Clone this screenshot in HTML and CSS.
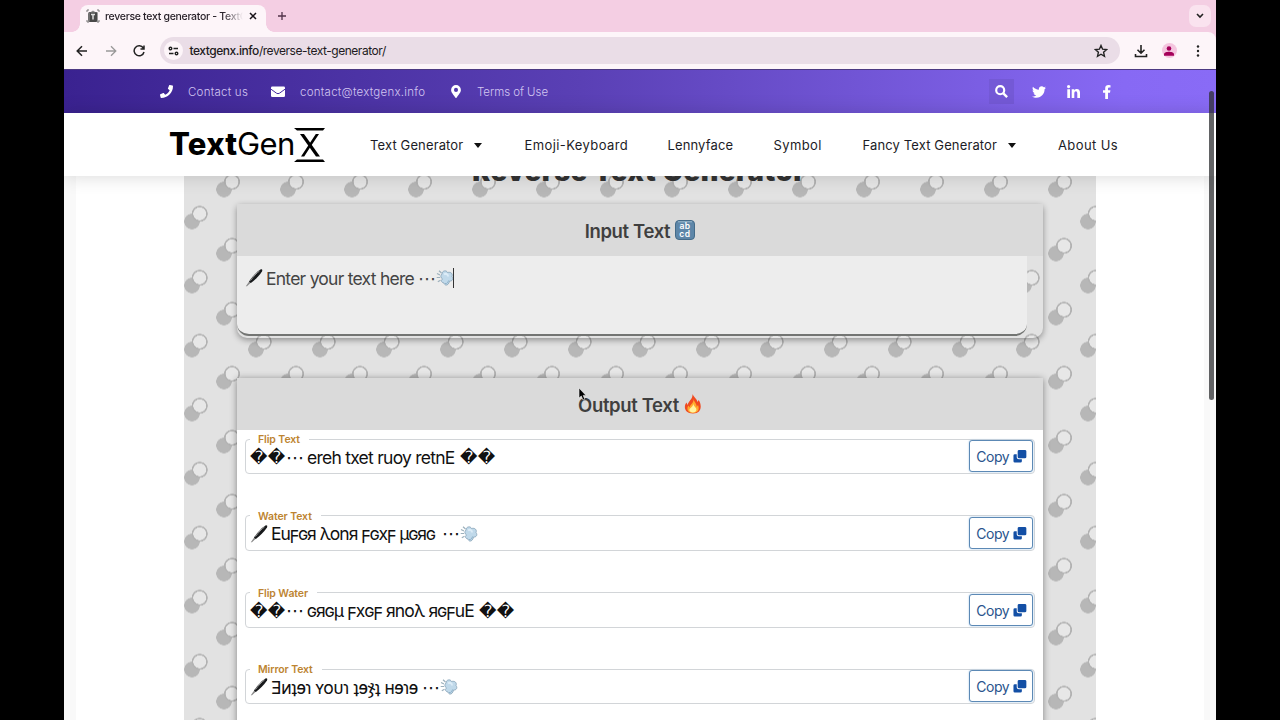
FILE: index.html
```html
<!DOCTYPE html>
<html lang="en">
<head>
<meta charset="utf-8">
<title>reverse text generator - TextGenX</title>
<link rel="stylesheet" href="styles.css">
</head>
<body>
<svg class="defs" aria-hidden="true">
  <symbol id="pen" viewBox="0 0 18 20"><path d="M.8 18.300 4.500 13 6.300 14.300 2 18.300z" fill="#8a8a8a"/><path d="M4 13.500C7.500 8.500 12 3.500 15.500 1.500 17 1 17.700 2 17 3.500 14 8 10 12 5.800 15z" fill="#17191b"/><path d="M5.500 12.500C8.500 8.500 11.500 5 14.500 3" stroke="#999" stroke-width="1" fill="none"/></symbol>
  <symbol id="dash" viewBox="0 0 18 18"><path d="M6 5C6 1.500 10.500.800 11.500 3.500 15 2.500 17.200 5 16 7.500 18 10 16 12.500 13.500 12 12.800 16.500 9 17.500 8 14 5 13.500 4.800 11 6.500 10 4.500 9 4.300 6.500 6 5z" fill="#c0d9ea" stroke="#86a2b6" stroke-width=".8"/><path d="M8 5.500c2-1.500 4 0 4 2" fill="none" stroke="#dcecf7" stroke-width="2"/><path d="M9 14.500c2 .5 3-1 3.500-3" fill="none" stroke="#8fb3cc" stroke-width="1"/><path d="M1 4.500 4 6M.700 8.500H4M1.800 12.800 4.500 11.300M3 1.800 5.500 4" stroke="#9cb0bc" stroke-width="1.200"/></symbol>
  <symbol id="copy" viewBox="0 0 15 15"><path d="M6.500.500h6.300a1.500 1.500 0 0 1 1.500 1.500v6a1.500 1.500 0 0 1-1.500 1.500H6.500A1.500 1.500 0 0 1 5 8V2A1.500 1.500 0 0 1 6.500.500z" fill="#134fa5"/><path d="M4 5H2A1.500 1.500 0 0 0 .500 6.500v6A1.500 1.500 0 0 0 2 14h6a1.500 1.500 0 0 0 1.500-1.500v-2H6.300A2.300 2.300 0 0 1 4 8.200z" fill="#134fa5"/></symbol>
</svg>
<div class="browser">
  <div class="tabstrip">
    <div class="tab">
      <svg class="favicon" viewBox="0 0 14 14"><path d="M1 3V1h2M11 1h2v2M13 11v2h-2M3 13H1v-2" fill="none" stroke="#777"/><rect x="2" y="3" width="10" height="10" rx="2" fill="#484848"/><path d="M4 3.500 7 1.500l3 2" fill="#888"/><path d="M5 5.500h4M7 5.500v5" stroke="#ddd" stroke-width="1.500"/><path d="M3 4v8M11.500 4v8" stroke="#999"/></svg>
      <span class="tab-title">reverse text generator - TextG</span>
      <svg class="tab-close" viewBox="0 0 8 8"><path d="m1 1 6 6M7 1 1 7" stroke="#191319" stroke-width="1.500"/></svg>
    </div>
    <svg class="tab-new" viewBox="0 0 10 10"><path d="M5 1v8M1 5h8" stroke="#51334a" stroke-width="1.300"/></svg>
    <div class="tab-menu"><svg width="8" height="6" viewBox="0 0 8 6"><path d="m1 1 3 3 3-3" fill="none" stroke="#222" stroke-width="1.600"/></svg></div>
  </div>
  <div class="toolbar">
    <svg class="nav-icon" viewBox="0 0 12 12"><path d="M11 6H1.500M6 1.200 1.200 6 6 10.800" fill="none" stroke="#222" stroke-width="1.500"/></svg>
    <svg class="nav-icon" viewBox="0 0 12 12"><path d="M1 6h9.500M6 1.200 10.800 6 6 10.800" fill="none" stroke="#999" stroke-width="1.300"/></svg>
    <svg class="nav-icon" viewBox="0 0 12 12"><path d="M10.300 3A5 5 0 1 0 11 7M11 .500V4H7.500" fill="none" stroke="#222" stroke-width="1.500"/></svg>
    <div class="omnibox">
      <span class="site-info"><svg width="11" height="10" viewBox="0 0 10 10"><g fill="none" stroke="#222" stroke-width="1.400"><circle cx="2" cy="2.500" r="1.300"/><path d="M5 2.500h4.500M.500 7.500H5"/><circle cx="8" cy="7.500" r="1.300"/></g></svg></span>
      <span class="url">textgenx.info<i>/reverse-text-generator/</i></span>
      <svg class="star" viewBox="0 0 14 14"><path d="m7 1.500 1.600 3.700 4 .400-3 2.700.900 4L7 10.200l-3.500 2.100.900-4-3-2.700 4-.400z" fill="none" stroke="#222" stroke-width="1.400"/></svg>
    </div>
    <svg class="download" viewBox="0 0 14 14"><path d="M7 1v8M3.500 5.700 7 9.200l3.500-3.500M1.500 10v2.500h11V10" fill="none" stroke="#222" stroke-width="1.600"/></svg>
    <span class="avatar"><svg width="10" height="10" viewBox="0 0 10 10"><circle cx="5" cy="2.500" r="2.300" fill="#a5005a"/><path d="M0 9.700V8.300C0 6.500 3 5.800 5 5.800s5 .700 5 2.500v1.400z" fill="#a5005a"/></svg></span>
    <svg class="kebab" viewBox="0 0 4 12"><g fill="#222"><circle cx="2" cy="1.500" r="1.200"/><circle cx="2" cy="6" r="1.200"/><circle cx="2" cy="10.500" r="1.200"/></g></svg>
  </div>
  <div class="topbar">
    <svg class="phone" viewBox="0 0 512 512"><path fill="#fff" d="M493.400 24.600l-104-24c-11.300-2.600-22.900 3.300-27.500 13.900l-48 112c-4.200 9.800-1.400 21.300 6.900 28l60.600 49.600c-36 76.700-98.900 140.500-177.200 177.200l-49.600-60.600c-6.800-8.300-18.200-11.100-28-6.900l-112 48C3.900 366.500-2 378.100.600 389.400l24 104C27.100 504.200 36.700 512 48 512c256.100 0 464-207.500 464-464 0-11.200-7.700-20.900-18.600-23.400z"/></svg>
    <span class="contact">Contact us</span>
    <svg class="mail" viewBox="0 0 14 11"><rect y=".5" width="14" height="10.500" rx="1.300" fill="#fff"/><path d="M0 3.200 5.500 7.200Q7 8.200 8.500 7.200L14 3.200" fill="none" stroke="#4429a0"/></svg>
    <span class="email">contact@textgenx.info</span>
    <svg class="pin" viewBox="0 0 384 512"><path fill="#fff" d="M172 502C27 291 0 270 0 192a192 192 0 1 1 384 0c0 78-27 99-172 310a24 24 0 0 1-40 0zM192 272a80 80 0 1 0 0-160 80 80 0 0 0 0 160z"/></svg>
    <span class="terms">Terms of Use</span>
    <span class="search"><svg width="13" height="13" viewBox="0 0 12 12"><circle cx="4.800" cy="4.800" r="3.700" fill="none" stroke="#fff" stroke-width="2"/><path d="m7.700 7.700 3.500 3.500" stroke="#fff" stroke-width="2.200"/></svg></span>
    <svg class="social" viewBox="0 0 512 512"><path fill="#fff" d="M459.400 151.700c.3 4.500.3 9.100.3 13.600 0 138.700-105.600 298.600-298.600 298.600-59.500 0-114.700-17.200-161.100-47.100 8.400 1 16.600 1.300 25.300 1.300 49.100 0 94.200-16.600 130.300-44.800-46.100-1-84.800-31.200-98.100-72.800 6.500 1 13 1.600 19.800 1.600 9.400 0 18.800-1.300 27.600-3.600-48.100-9.700-84.100-52-84.100-103v-1.300c14 7.800 30.200 12.700 47.400 13.300-28.300-18.800-46.800-51-46.800-87.400 0-19.500 5.200-37.400 14.300-53 51.700 63.700 129.300 105.300 216.400 109.800-1.600-7.800-2.600-15.900-2.600-24 0-57.800 46.800-104.900 104.900-104.900 30.200 0 57.500 12.700 76.700 33.100 23.700-4.500 46.500-13.300 66.600-25.300-7.800 24.400-24.400 44.800-46.100 57.800 21.100-2.300 41.600-8.100 60.400-16.200-14.300 20.800-32.200 39.300-52.600 54.300z"/></svg>
    <svg class="social in" viewBox="0 0 13 13"><path fill="#fff" d="M.300 4.300H3V13H.300zM4.700 4.300h2.600v1.200C8.700 3.300 13 3.500 13 7.600V13h-2.700V8.500c0-3-3-2.700-3 0V13H4.700z"/><circle cx="1.600" cy="1.600" r="1.600" fill="#fff"/></svg>
    <svg class="fb" viewBox="0 0 8 14"><path fill="#fff" d="M2.200 14V7.800H0V5.200h2.200V3.300C2.200 1.100 3.500 0 5.500 0L7.500.200v2.200H6.300C5.200 2.400 5 3 5 3.700v1.500h2.400L7 7.800H5V14z"/></svg>
  </div>
  <header class="site-header">
    <div class="logo"><b>Text</b><span>Gen</span><svg width="32" height="36" viewBox="0 0 32 36"><path d="M0 1h31l-2 2.600H3zM3 32.400h26l2 2.600H0z" fill="#000"/><path d="M25 7h-3.200L7 29.500h3.200L17 19z" fill="#000"/><path d="M6 7h4L26 29.500H22z" fill="#000"/></svg></div>
    <nav class="menu">
      <a class="m1">Text Generator</a><a class="m2">Emoji-Keyboard</a><a class="m3">Lennyface</a><a class="m4">Symbol</a><a class="m5">Fancy Text Generator</a><a class="m6">About Us</a>
    </nav>
  </header>
  <div class="page">
    <main class="content">
      <h1>Reverse Text Generator</h1>
      <section class="card input-card">
        <h2>Input Text <svg class="emoji" viewBox="0 0 20 20"><rect x=".5" y=".5" width="19" height="19" rx="3.500" fill="#5d86a8" stroke="#446b89"/><path d="M3 1.800h14" stroke="#9dbbcf"/><g fill="#fff" font-family="Inter" font-weight="600" font-size="8.500" text-anchor="middle"><text x="10" y="8.500" letter-spacing=".5">ab</text><text x="10" y="16.500" letter-spacing=".5">cd</text></g></svg></h2>
        <div class="textarea"><svg class="pen"><use href="#pen"/></svg><span class="typed">Enter your text here</span><span class="dots">⋯</span><svg class="dash"><use href="#dash"/></svg><i class="caret"></i></div>
      </section>
      <section class="card output-card">
        <h2>Output Text <svg class="emoji flame" viewBox="0 0 18 20"><path d="M8.500 0C10 3.500 13 5 13.500 8l1.200-2C18 11 18 19.500 9 19.500 0 19.500-.500 12 2.500 8.500L3.500 11C4.500 7 9 5 8.500 0z" fill="#f04a20"/><path d="M9.500 5c.300 2.500 3.500 5 3.200 8l1.300-2C16 16 13.500 19 9 19c-4.700 0-7-3.500-4.700-7.500l1.400 2C5.700 10.500 9.800 9.500 9.500 5z" fill="#ffab2e"/><path d="M9.400 9.500c0 3 3.500 4 3 6.500-.500 3.500-7 3.200-7 0 0-2 4-3.300 4-6.500z" fill="#fff3a0"/></svg></h2>
        <div class="rows">
          <fieldset><legend>Flip Text</legend><p><span class="fffd">��</span><span class="dots">⋯</span><span class="t1">ereh txet ruoy retnE</span><span class="fffd">��</span></p><button>Copy <svg><use href="#copy"/></svg></button></fieldset>
          <fieldset><legend>Water Text</legend><p><svg class="pen"><use href="#pen"/></svg><span class="t2">Euϝɢя λonя ϝɢxϝ µɢяɢ</span><span class="dots">⋯</span><svg class="dash"><use href="#dash"/></svg></p><button>Copy <svg><use href="#copy"/></svg></button></fieldset>
          <fieldset><legend>Flip Water</legend><p><span class="fffd">��</span><span class="dots">⋯</span><span class="t3">ɢяɢµ ϝxɢϝ яnoλ яɢϝuE</span><span class="fffd">��</span></p><button>Copy <svg><use href="#copy"/></svg></button></fieldset>
          <fieldset><legend>Mirror Text</legend><p><svg class="pen"><use href="#pen"/></svg><span class="t4">Ǝᴎʇɘɿ ʏoᴜɿ ʇɘჯʇ ʜɘɿɘ</span><span class="dots">⋯</span><svg class="dash"><use href="#dash"/></svg></p><button>Copy <svg><use href="#copy"/></svg></button></fieldset>
        </div>
      </section>
    </main>
  </div>
  <div class="scroll-thumb"></div>
  <svg class="cursor" viewBox="0 0 9 14"><path d="M1 1v10l2.300-2 1.700 4 1.800-.8L5.200 8.400H8z" fill="#000" stroke="#eee" stroke-width=".6"/></svg>
</div>
</body>
</html>
```

FILE: styles.css
```css
* { box-sizing: border-box; }
body { margin: 0; background: #000; font-family: Inter, "Noto Sans", "DejaVu Sans", sans-serif; overflow: hidden; }
svg { flex: none; display: block; }
span, a, p, h1, h2, legend { white-space: nowrap; }
.defs { position: absolute; width: 0; height: 0; }
.browser { position: relative; width: 1152px; height: 720px; margin: 0 auto; overflow: hidden; background: #f4cee3; display: flex; flex-direction: column; }

.tabstrip { height: 32px; flex: none; display: flex; align-items: center; padding: 0 5px 0 16px; }
.tab { position: relative; width: 186px; height: 27px; margin-top: 5px; background: #fdf5f9; border-radius: 8px 8px 0 0; display: flex; align-items: center; padding: 0 9px 5px 6px; }
.tab::before, .tab::after { content: ""; position: absolute; bottom: 0; width: 8px; height: 8px; }
.tab::before { left: -8px; background: radial-gradient(circle at 0 0, transparent 7.5px, #fdf5f9 8px); }
.tab::after { right: -8px; background: radial-gradient(circle at 100% 0, transparent 7.5px, #fdf5f9 8px); }
.favicon { width: 14px; height: 14px; }
.tab-title { margin: 1px 0 0 5px; width: 138px; overflow: hidden; font-size: 10.5px; line-height: 16px; letter-spacing: -.3px; font-weight: 500; color: #29222a; -webkit-mask-image: linear-gradient(90deg, #000 118px, transparent 138px); }
.tab-close { width: 8px; height: 8px; margin-left: auto; }
.tab-new { width: 10px; height: 10px; margin-left: 11px; }
.tab-menu { width: 22px; height: 22px; margin-left: auto; border-radius: 7px; background: #fae3ef; display: flex; align-items: center; justify-content: center; }

.toolbar { height: 37px; flex: none; background: #fdf5f9; border-radius: 0 8px 0 0; display: flex; align-items: center; padding-left: 12px; }
.nav-icon { width: 12px; height: 12px; margin-right: 16.5px; }
.omnibox { width: 960px; height: 27px; border-radius: 14px; background: #eadde7; display: flex; align-items: center; padding: 0 12px 0 4px; margin-left: -2px; }
.site-info { width: 19px; height: 19px; border-radius: 50%; background: #fdf5f9; display: flex; align-items: center; justify-content: center; }
.url { margin-left: 7px; font-size: 12px; color: #211a21; font-weight: 500; letter-spacing: -.46px; }
.url i { font-style: normal; font-weight: 400; }
.star { width: 14px; height: 14px; margin-left: auto; }
.download { width: 14px; height: 14px; margin-left: 14px; }
.avatar { width: 15px; height: 15px; border-radius: 50%; background: #f4c5df; margin-left: 14px; display: flex; align-items: center; justify-content: center; }
.kebab { width: 4px; height: 12px; margin-left: 19px; }

.topbar { height: 44px; flex: none; background: linear-gradient(90deg, #3a2290 0%, #5a40b5 45%, #8769f4 92%, #896bf6 100%); border-top: 1px solid #4c3982; display: flex; align-items: center; padding-left: 96px; color: #d2c6f1; font-weight: 300; font-size: 11.5px; }
.phone { width: 13px; height: 13px; }
.contact { width: 60px; margin-left: 15px; letter-spacing: .25px; }
.mail { width: 14px; height: 11px; margin-left: 23px; }
.email { width: 127px; margin-left: 15px; letter-spacing: .26px; }
.pin { width: 10px; height: 13px; margin-left: 24px; }
.terms { width: 72px; margin-left: 16px; letter-spacing: -.05px; }
.search { width: 25px; height: 25px; margin-left: 440px; background: #7459d6; display: flex; align-items: center; justify-content: center; }
.social { width: 14px; height: 14px; margin-left: 18px; }
.social.in { width: 13px; height: 13px; margin-left: 21px; margin-top: -1px; }
.fb { width: 8px; height: 14px; margin-left: 23px; }

.site-header { position: relative; z-index: 2; height: 63px; flex: none; background: #fff; display: flex; align-items: center; box-shadow: 0 0 18px rgba(0,0,0,.16); padding: 1px 0 0 105px; }
.logo { width: 157px; display: flex; align-items: center; color: #000; font-size: 31px; }
.logo b { font-weight: 800; font-size: 31px; letter-spacing: .3px; width: 68px; line-height: 36px; margin-top: -2px; }
.logo span { font-weight: 400; letter-spacing: -.6px; width: 57px; line-height: 36px; margin-top: -2px; }
.menu { display: flex; color: #1c1c26; font-size: 13px; margin-left: 44px; letter-spacing: .13px; }
.menu a { display: flex; align-items: center; justify-content: space-between; }
.m1::after, .m5::after { content: ""; border: 4.500px solid transparent; border-top: 5px solid #111; border-bottom: 0; }
.m1 { width: 112px; } .m2 { width: 103px; margin-left: 42.5px; letter-spacing: .4px; } .m3 { width: 66px; margin-left: 40px; } .m4 { width: 49px; margin-left: 40px; letter-spacing: .4px; } .m5 { width: 153px; margin-left: 40px; } .m6 { width: 60px; margin-left: 42.5px; letter-spacing: .4px; }

.page { flex: 1; min-height: 0; background: linear-gradient(90deg, #f9f9f9 12px, #fff 12px, #fff 1140px, #f9f9f9 1140px); padding: 0 120px; }
.content { height: 544px; overflow: hidden; padding: 0 53px;
  background-color: #e2e2e2;
  background-image:
    radial-gradient(circle at 15.700px 8.300px, #e7e7e7 6.200px, #b2b2b2 6.600px, #b2b2b2 7.700px, transparent 8.200px),
    radial-gradient(circle at 48px 40.300px, #e7e7e7 6.200px, #b2b2b2 6.600px, #b2b2b2 7.700px, transparent 8.200px),
    radial-gradient(circle at 8px 16px, #b7b7b7 7.500px, transparent 8px),
    radial-gradient(circle at 40px 48px, #b7b7b7 7.500px, transparent 8px);
  background-size: 64px 64px; background-position: 0 29.500px; }
h1 { margin: -22px 0 0; height: 50px; line-height: 36px; text-align: center; font-size: 27px; font-weight: 900; color: #333; letter-spacing: .7px; text-indent: -2px; }
.card { box-shadow: 0 1px 7px rgba(0,0,0,.42); }
.card h2 { margin: 0; height: 52px; padding-top: 1px; background: #dadada; display: flex; align-items: center; justify-content: center; font-size: 18.500px; font-weight: 600; letter-spacing: -.36px; color: #3f3f3f; }
.emoji { width: 20px; height: 20px; margin: -2px 0 0 5px; }
.flame { width: 18px; }
.input-card { height: 134px; border-radius: 4px 4px 10px 10px; box-shadow: 0 2px 6px rgba(0,0,0,.38); }
.textarea { width: 790px; height: 80px; border-radius: 0 0 12px 12px; background: #ededed; border-bottom: 2px solid #737573; display: flex; align-items: center; padding: 0 8px 34px; color: #444; font-size: 17.500px; }
.pen { width: 18px; height: 20px; }
.dash { width: 18px; height: 18px; }
.dots { width: 18px; font-size: 18px; text-align: center; letter-spacing: 0; }
.typed { width: 152px; margin-left: 3px; letter-spacing: -.75px; }
.caret { width: 1px; height: 20px; margin-left: -1px; background: #333; }
.output-card { margin-top: 40px; height: 390px; background: #fff; }
.rows { padding: 3px 8px 0; }
fieldset { position: relative; width: 790px; height: 41px; margin: 0 0 35.800px; padding: 0 2px 0 4px; border: 1px solid #d2d5d8; border-radius: 4px; display: block; }
legend { height: 12px; line-height: 14px; margin-left: 0; padding: 0 9px 0 8px; font-size: 10.5px; font-weight: 600; color: #bd8431; letter-spacing: -.1px; }
fieldset p { margin: -1.500px 0 0; height: 27px; display: flex; align-items: center; font-size: 17.500px; color: #111; }
fieldset button { position: absolute; right: 1px; bottom: 1px; width: 64px; height: 32px; border: 1px solid #5c89b5; border-radius: 3px; background: #fff; box-shadow: 0 0 2px #9dc2e5; color: #29548d; font: 14px Inter, sans-serif; letter-spacing: -.5px; padding: 1px 0 0 1px; display: flex; gap: 3.500px; align-items: center; justify-content: center; }
button svg { width: 14px; height: 15px; }
.fffd { width: 36px; font: 17px "DejaVu Sans", sans-serif; letter-spacing: .3px; }
.t1 { width: 153px; margin-left: 3px; letter-spacing: -.75px; }
.t2 { width: 171px; margin-left: 3px; letter-spacing: -1px; }
.t3 { width: 172px; margin-left: 3px; letter-spacing: -.85px; }
.t4 { width: 151px; margin-left: 3px; letter-spacing: -.5px; }
.scroll-thumb { position: absolute; z-index: 3; right: 2px; top: 91px; width: 5px; height: 309px; border-radius: 3px; background: rgba(45,47,49,.75); }
.cursor { position: absolute; z-index: 4; left: 514px; top: 387px; width: 9px; height: 14px; }
```
